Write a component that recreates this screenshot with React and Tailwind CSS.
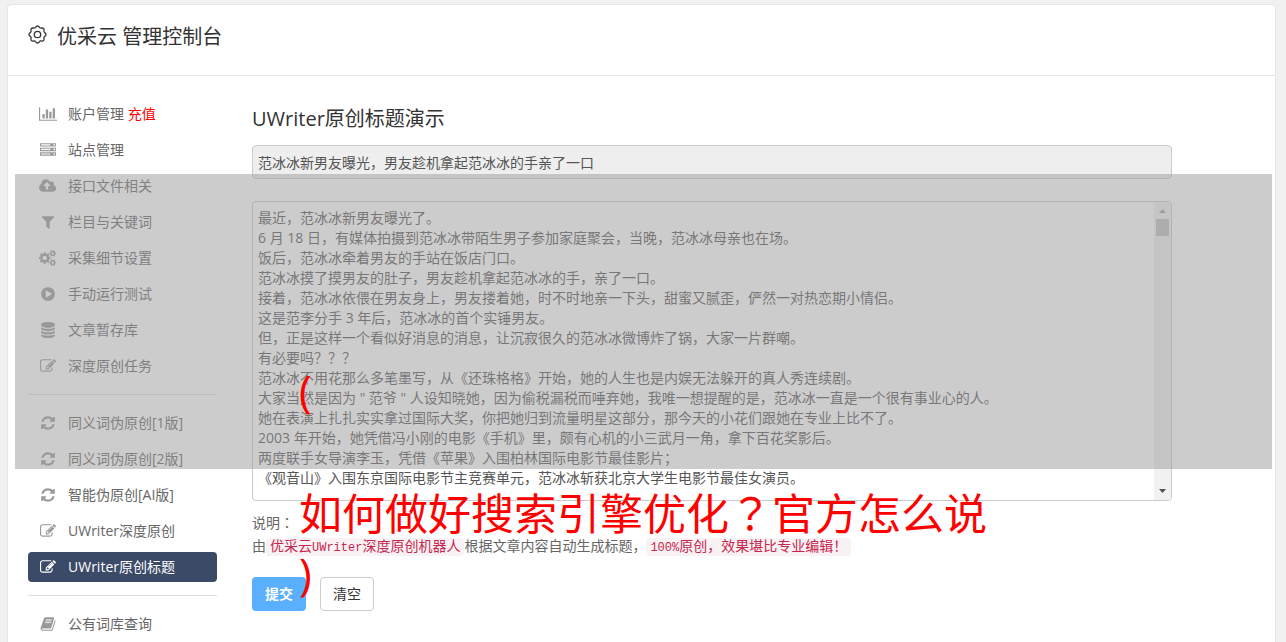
import React from "react";

const ICONS = {
  chart: {
    w: 2048,
    d: "M640 896v512h-256v-512h256zm384-512v1024h-256v-1024h256zm1024 1152v128h-2048v-1536h128v1408h1920zm-640-896v768h-256v-768h256zm384-384v1152h-256v-1152h256z",
  },
  server: {
    w: 1792,
    d: "M128 1408h1024v-128h-1024v128zm0-512h1024v-128h-1024v128zm1568 448q0-40-28-68t-68-28-68 28-28 68 28 68 68 28 68-28 28-68zm-1568-960h1024v-128h-1024v128zm1568 448q0-40-28-68t-68-28-68 28-28 68 28 68 68 28 68-28 28-68zm0-512q0-40-28-68t-68-28-68 28-28 68 28 68 68 28 68-28 28-68zm96 832v384h-1792v-384h1792zm0-512v384h-1792v-384h1792zm0-512v384h-1792v-384h1792z",
  },
  cloud: {
    w: 1920,
    d: "M1280 864q0-14-9-23l-352-352q-9-9-23-9t-23 9l-351 351q-10 12-10 24 0 14 9 23t23 9h224v352q0 13 9.5 22.5t22.5 9.5h192q13 0 22.5-9.5t9.5-22.5v-352h224q13 0 22.5-9.5t9.5-22.5zm640 288q0 159-112.5 271.5t-271.5 112.5h-1088q-185 0-316.5-131.5t-131.5-316.5q0-130 70-240t188-165q-2-30-2-43 0-212 150-362t362-150q156 0 285.5 87t188.5 231q71-62 166-62 106 0 181 75t75 181q0 76-41 138 130 31 213.5 135.5t83.5 238.5z",
  },
  filter: {
    w: 1792,
    d: "M1595 295q17 41-14 70l-493 493v742q0 42-39 59-13 5-25 5-27 0-45-19l-256-256q-19-19-19-45v-486l-493-493q-31-29-14-70 17-39 59-39h1280q42 0 59 39z",
  },
  cogs: {
    w: 1920,
    d: "M896 896q0-106-75-181t-181-75-181 75-75 181 75 181 181 75 181-75 75-181zm768 512q0-52-38-90t-90-38-90 38-38 90q0 53 37.5 90.5t90.5 37.5 90.5-37.5 37.5-90.5zm0-1024q0-52-38-90t-90-38-90 38-38 90q0 53 37.5 90.5t90.5 37.5 90.5-37.5 37.5-90.5zm-384 421v185q0 10-7 19.5t-16 10.5l-155 24q-11 35-32 76 34 48 90 115 7 11 7 20 0 12-7 19-23 30-82.5 89.5t-78.5 59.5q-11 0-21-7l-115-90q-37 19-77 31-11 108-23 155-7 24-30 24h-186q-11 0-20-7.5t-10-17.5l-23-153q-34-10-75-31l-118 89q-7 7-20 7-11 0-21-8-144-133-144-160 0-9 7-19 10-14 41-53t47-61q-23-44-35-82l-152-24q-10-1-17-9.5t-7-19.5v-185q0-10 7-19.5t16-10.5l155-24q11-35 32-76-34-48-90-115-7-11-7-20 0-12 7-20 22-30 82-89t79-59q11 0 21 7l115 90q34-18 77-32 11-108 23-154 7-24 30-24h186q11 0 20 7.5t10 17.5l23 153q34 10 75 31l118-89q8-7 20-7 11 0 21 8 144 133 144 160 0 8-7 19-12 16-42 54t-45 60q23 48 34 82l152 23q10 2 17 10.5t7 19.5zm640 533v140q0 16-149 31-12 27-30 52 51 113 51 138 0 4-4 7-122 71-124 71-8 0-46-47t-52-68q-20 2-30 2t-30-2q-14 21-52 68t-46 47q-2 0-124-71-4-3-4-7 0-25 51-138-18-25-30-52-149-15-149-31v-140q0-16 149-31 13-29 30-52-51-113-51-138 0-4 4-7 4-2 35-20t59-34 30-16q8 0 46 46.5t52 67.5q20-2 30-2t30 2q51-71 92-112l6-2q4 0 124 70 4 3 4 7 0 25-51 138 17 23 30 52 149 15 149 31zm0-1024v140q0 16-149 31-12 27-30 52 51 113 51 138 0 4-4 7-122 71-124 71-8 0-46-47t-52-68q-20 2-30 2t-30-2q-14 21-52 68t-46 47q-2 0-124-71-4-3-4-7 0-25 51-138-18-25-30-52-149-15-149-31v-140q0-16 149-31 13-29 30-52-51-113-51-138 0-4 4-7 4-2 35-20t59-34 30-16q8 0 46 46.5t52 67.5q20-2 30-2t30 2q51-71 92-112l6-2q4 0 124 70 4 3 4 7 0 25-51 138 17 23 30 52 149 15 149 31z",
  },
  play: {
    w: 1792,
    d: "M896 128q209 0 385.5 103t279.5 279.5 103 385.5-103 385.5-279.5 279.5-385.5 103-385.5-103-279.5-279.5-103-385.5 103-385.5 279.5-279.5 385.5-103zm384 823q32-18 32-55t-32-55l-544-320q-31-19-64-1-32 19-32 56v640q0 37 32 56 16 8 32 8 17 0 32-9z",
  },
  database: {
    w: 1792,
    d: "M896 768q237 0 443-43t325-127v170q0 69-103 128t-280 93.5-385 34.5-385-34.5-280-93.5-103-128v-170q119 84 325 127t443 43zm0 768q237 0 443-43t325-127v170q0 69-103 128t-280 93.5-385 34.5-385-34.5-280-93.5-103-128v-170q119 84 325 127t443 43zm0-384q237 0 443-43t325-127v170q0 69-103 128t-280 93.5-385 34.5-385-34.5-280-93.5-103-128v-170q119 84 325 127t443 43zm0-1152q208 0 385 34.5t280 93.5 103 128v128q0 69-103 128t-280 93.5-385 34.5-385-34.5-280-93.5-103-128v-128q0-69 103-128t280-93.5 385-34.5z",
  },
  edit: {
    w: 1792,
    d: "M888 1184l116-116-152-152-116 116v56h96v96h56zm440-720q-16-16-33 1l-350 350q-17 17-1 33t33-1l350-350q17-17 1-33zm80 594v190q0 119-84.5 203.5t-203.5 84.5h-832q-119 0-203.5-84.5t-84.5-203.5v-832q0-119 84.5-203.5t203.5-84.5h832q63 0 117 25 15 7 18 23 3 17-9 29l-49 49q-14 14-32 8-23-6-45-6h-832q-66 0-113 47t-47 113v832q0 66 47 113t113 47h832q66 0 113-47t47-113v-126q0-13 9-22l64-64q15-15 35-7t20 29zm-96-738l288 288-672 672h-288v-288zm444 132l-92 92-288-288 92-92q28-28 68-28t68 28l152 152q28 28 28 68t-28 68z",
  },
  refresh: {
    w: 1792,
    d: "M1639 1056q0 5-1 7-64 268-268 434.5t-478 166.5q-146 0-282.5-55t-243.5-157l-129 129q-19 19-45 19t-45-19-19-45v-448q0-26 19-45t45-19h448q26 0 45 19t19 45-19 45l-137 137q71 66 161 102t187 36q134 0 250-65t186-179q11-17 53-117 8-23 30-23h192q13 0 22.5 9.5t9.5 22.5zm25-800v448q0 26-19 45t-45 19h-448q-26 0-45-19t-19-45 19-45l138-138q-148-137-349-137-134 0-250 65t-186 179q-11 17-53 117-8 23-30 23h-199q-13 0-22.5-9.5t-9.5-22.5v-7q65-268 270-434.5t480-166.5q146 0 284 55.5t245 156.5l130-129q19-19 45-19t45 19 19 45z",
  },
  book: {
    w: 1792,
    d: "M1703 478q40 57 18 129l-275 906q-19 64-76.5 107.5t-122.5 43.5h-923q-77 0-148.5-53.5t-99.5-131.5q-24-67-2-127 0-4 3-27t4-37q1-8-3-21.5t-3-19.5q2-11 8-21t16.5-23.5 16.5-23.5q23-38 45-91.5t30-91.5q3-10 .5-30t-.5-28q3-11 17-28t17-23q21-36 42-92t25-90q1-9-2.5-32t.5-28q4-13 22-30.5t22-22.5q19-26 42.5-84.5t27.5-96.5q1-8-3-25.5t-2-26.5q2-8 9-18t18-23 17-21q8-12 16.5-30.5t15-35 16-36 19.5-32 26.5-23.5 36-11.5 47.5 5.5l-1 3q38-9 51-9h761q74 0 114 56t18 130l-274 906q-36 119-71.5 153.5t-128.5 34.5h-869q-27 0-38 15-11 16-1 43 24 70 144 70h923q29 0 56-15.5t35-41.5l300-987q7-22 5-57 38 15 59 43zm-1064 2q-4 13 2 22.5t20 9.5h608q13 0 25.5-9.5t16.5-22.5l21-64q4-13-2-22.5t-20-9.5h-608q-13 0-25.5 9.5t-16.5 22.5zm-83 256q-4 13 2 22.5t20 9.5h608q13 0 25.5-9.5t16.5-22.5l21-64q4-13-2-22.5t-20-9.5h-608q-13 0-25.5 9.5t-16.5 22.5z",
  },
};

function Icon({ name }) {
  const { w, d } = ICONS[name];
  return (
    <svg viewBox={`0 0 ${w} 1792`} className="h-4 w-auto shrink-0" fill="currentColor" aria-hidden="true">
      <path d={d} />
    </svg>
  );
}

// Rounded eight-lobed gear outline, centred on the origin.
const GEAR_PATH =
  Array.from({ length: 96 }, (_, i) => {
    const a = (i / 96) * Math.PI * 2;
    const wave = Math.cos(8 * a);
    const r = 7.8 + 0.7 * Math.sign(wave) * Math.pow(Math.abs(wave), 0.6);
    return `${i ? "L" : "M"}${(r * Math.cos(a)).toFixed(2)} ${(r * Math.sin(a)).toFixed(2)}`;
  }).join("") + "Z";

function Gear() {
  return (
    <svg viewBox="-9.5 -9.5 19 19" className="h-[19px] w-[19px]" fill="none" stroke="currentColor" strokeWidth="1.3" strokeLinejoin="round" aria-hidden="true">
      <path d={GEAR_PATH} />
      <circle r="3.2" />
    </svg>
  );
}

const GROUPS = [
  [
    { icon: "chart", label: "账户管理", extra: "充值" },
    { icon: "server", label: "站点管理" },
    { icon: "cloud", label: "接口文件相关" },
    { icon: "filter", label: "栏目与关键词" },
    { icon: "cogs", label: "采集细节设置" },
    { icon: "play", label: "手动运行测试" },
    { icon: "database", label: "文章暂存库" },
    { icon: "edit", label: "深度原创任务" },
  ],
  [
    { icon: "refresh", label: "同义词伪原创[1版]" },
    { icon: "refresh", label: "同义词伪原创[2版]" },
    { icon: "refresh", label: "智能伪原创[AI版]" },
    { icon: "edit", label: "UWriter深度原创" },
    { icon: "edit", label: "UWriter原创标题", active: true },
  ],
  [{ icon: "book", label: "公有词库查询" }],
];

const ARTICLE = [
  "最近，范冰冰新男友曝光了。",
  "6 月 18 日，有媒体拍摄到范冰冰带陌生男子参加家庭聚会，当晚，范冰冰母亲也在场。",
  "饭后，范冰冰牵着男友的手站在饭店门口。",
  "范冰冰摸了摸男友的肚子，男友趁机拿起范冰冰的手，亲了一口。",
  "接着，范冰冰依偎在男友身上，男友搂着她，时不时地亲一下头，甜蜜又腻歪，俨然一对热恋期小情侣。",
  "这是范李分手 3 年后，范冰冰的首个实锤男友。",
  "但，正是这样一个看似好消息的消息，让沉寂很久的范冰冰微博炸了锅，大家一片群嘲。",
  "有必要吗？？？",
  "范冰冰不用花那么多笔墨写，从《还珠格格》开始，她的人生也是内娱无法躲开的真人秀连续剧。",
  "大家当然是因为 \" 范爷 \" 人设知晓她，因为偷税漏税而唾弃她，我唯一想提醒的是，范冰冰一直是一个很有事业心的人。",
  "她在表演上扎扎实实拿过国际大奖，你把她归到流量明星这部分，那今天的小花们跟她在专业上比不了。",
  "2003 年开始，她凭借冯小刚的电影《手机》里，颇有心机的小三武月一角，拿下百花奖影后。",
  "两度联手女导演李玉，凭借《苹果》入围柏林国际电影节最佳影片；",
  "《观音山》入围东京国际电影节主竞赛单元，范冰冰斩获北京大学生电影节最佳女演员。",
].join("\n");

function MenuItem({ icon, label, extra, active }) {
  return (
    <a
      href="#"
      className={
        active
          ? "flex h-[30px] items-center gap-2.5 rounded bg-[#3b4a66] pl-2.5 text-white"
          : "flex h-[30px] items-center gap-2.5 rounded pl-2.5 text-[#666]"
      }
    >
      <span className={active ? "flex w-5 justify-center text-white" : "flex w-5 justify-center text-[#999]"}>
        <Icon name={icon} />
      </span>
      <span>
        {label}
        {extra && <span className="text-[#f00]"> {extra}</span>}
      </span>
    </a>
  );
}

function Code({ children }) {
  return (
    <code className="rounded bg-[#f9f2f4] px-1 py-px font-['Liberation_Mono','Noto_Sans_CJK_SC',monospace] text-sm leading-none text-[#c7254e]">
      {children}
    </code>
  );
}

export default function App() {
  return (
    <div className="relative flex min-h-screen flex-col bg-[#f1f1f1] pt-1 pr-2.5 pl-[7px] font-['Open_Sans','Noto_Sans_CJK_SC',sans-serif] text-sm text-[#666]">
      <div className="flex flex-1 flex-col rounded-t border border-b-0 border-[#e5e5e5] bg-white">
        <header className="flex h-[71px] items-start gap-2.5 border-b border-[#e5e5e5] px-5 pt-4 text-[#333]">
          <span className="flex h-[27px] items-center">
            <Gear />
          </span>
          <h1 className="text-xl leading-8">优采云 管理控制台</h1>
        </header>
        <div className="flex gap-[35px] px-5 pt-[23px]">
          <nav className="flex w-[189px] shrink-0 flex-col divide-y divide-[#ddd]" aria-label="主菜单">
            {GROUPS.map((items, i) => (
              <div key={i} className="flex flex-col gap-1.5 py-[13px] first:pt-0 last:pb-0">
                {items.map((item) => (
                  <MenuItem key={item.label} {...item} />
                ))}
              </div>
            ))}
          </nav>
          <main className="min-w-0 max-w-[920px] flex-1">
            <h2 className="pt-1 text-xl leading-8 text-[#333]">
              <label htmlFor="title">UWriter原创标题演示</label>
            </h2>
            <input
              id="title"
              readOnly
              defaultValue="范冰冰新男友曝光，男友趁机拿起范冰冰的手亲了一口"
              className="mt-2.5 block h-[34px] w-full rounded border border-[#ccc] bg-[#eee] px-[5px] text-[#555] outline-none"
            />
            <div className="mt-[22px] flex h-[300px] overflow-hidden rounded border border-[#ccc]">
              <textarea
                aria-label="文章内容"
                defaultValue={ARTICLE}
                className="h-full min-w-0 flex-1 resize-none overflow-hidden px-[5px] py-1.5 leading-5 text-[#555] outline-none"
              />
              <div className="flex w-[17px] flex-col items-center bg-[#f1f1f1]" aria-hidden="true">
                <svg className="h-[17px] w-[17px]" viewBox="0 0 17 17" fill="#a3a3a3">
                  <path d="M5 11L8.500 7L12 11Z" />
                </svg>
                <div className="h-[17px] w-[13px] bg-[#c1c1c1]" />
                <svg className="mt-auto h-[17px] w-[17px]" viewBox="0 0 17 17" fill="#505050">
                  <path d="M5 6L12 6L8.500 10Z" />
                </svg>
              </div>
            </div>
            <p className="mt-2.5 leading-[23px]">
              说明<span className="font-['Noto_Sans_CJK_JP',sans-serif] leading-none">：</span>
              <br />
              由<Code>优采云<span className="text-xs leading-none">UWriter</span>深度原创机器人</Code>根据文章内容自动生成标题，<Code><span className="text-xs leading-none">100%</span>原创，效果堪比专业编辑！</Code>
            </p>
            <div className="mt-5 flex gap-3.5">
              <button type="button" className="h-[34px] w-[54px] rounded bg-[#5aafff] font-bold text-white">
                提交
              </button>
              <button type="button" className="h-[34px] w-[54px] rounded border border-[#ccc] bg-white text-[#333]">
                清空
              </button>
            </div>
          </main>
        </div>
      </div>

      <div className="pointer-events-none absolute top-[174px] right-3.5 left-[15px] h-[295px] bg-[#999]/50" />
      <div className="pointer-events-none absolute top-[361px] left-[299px] font-['Open_Sans','Noto_Sans_CJK_JP',sans-serif] text-[43px] leading-[60px] whitespace-pre text-[#f00]">
        {"(\n\n"}
        <span className="font-['Noto_Sans_CJK_SC',sans-serif]">如何做好搜索引擎优化</span>？
        <span className="font-['Noto_Sans_CJK_SC',sans-serif]">官方怎么说</span>
        {"\n)"}
      </div>
    </div>
  );
}
